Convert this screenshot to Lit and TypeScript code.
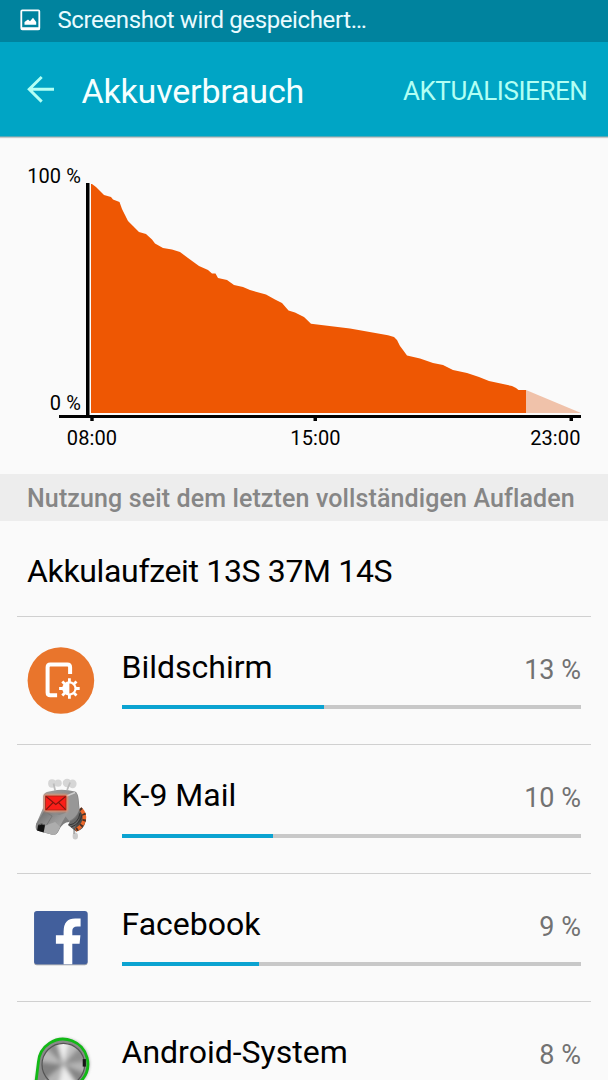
import { LitElement, html, css, svg, TemplateResult } from "lit";
import { customElement, property } from "lit/decorators.js";

const screenIcon = svg`
  <circle cx="33.3" cy="33.5" r="33.3" fill="#e9752c"/>
  <path d="M42.5 27V20.2Q42.5 17.5 39.8 17.5H22.7Q20 17.5 20 20.2V45.5Q20 48.2 22.7 48.2H29.5" fill="none" stroke="#fff" stroke-width="4"/>
  <g transform="translate(41.8 41.5)">
    <circle r="11" fill="#e9752c"/>
    <g stroke="#fff" stroke-width="2.8">
      <path d="M0-10.3V10.3M-10.3 0H10.3M-7.1-7.1L7.1 7.1M7.1-7.1L-7.1 7.1"/>
    </g>
    <circle r="7.2" fill="#fff"/>
    <path d="M0-5A5 5 0 0 1 0 5Z" fill="#e9752c"/>
  </g>`;

const mailIcon = svg`
  <defs>
    <linearGradient id="dog" x1="0" y1="0" x2="1" y2="1">
      <stop offset="0" stop-color="#a4a4a4"/><stop offset=".45" stop-color="#8d8d8d"/><stop offset="1" stop-color="#686868"/>
    </linearGradient>
    <linearGradient id="snout" x1="0" y1="0" x2="1" y2="1">
      <stop offset="0" stop-color="#666"/><stop offset=".5" stop-color="#989898"/><stop offset="1" stop-color="#b4b4b4"/>
    </linearGradient>
    <filter id="glow" x="-30%" y="-30%" width="160%" height="160%"><feGaussianBlur stdDeviation="1.2"/></filter>
  </defs>
  <g transform="translate(-7.5 -10)">
    <g fill="#d6d6d6">
      <ellipse cx="32" cy="18.5" rx="4" ry="4.2"/><ellipse cx="38" cy="18.2" rx="3.6" ry="3.6"/>
      <ellipse cx="47" cy="18" rx="4.4" ry="4.2"/><ellipse cx="52.5" cy="18.8" rx="4" ry="4.4"/>
    </g>
    <path d="M33.5 18.5L35 25.5M50 17.5L47 25" stroke="#bcbcbc" stroke-width="1.8" fill="none"/>
    <ellipse cx="55.2" cy="71" rx="2.7" ry="3.6" fill="#cacaca"/>
    <path d="M54 64V69" stroke="#aaa" stroke-width="1.8"/>
    <path d="M60 43Q67 47 65.5 56Q64 65 56 66.5L48 60Z" fill="#4c4a48"/>
    <path d="M60 43.8Q65.5 48 64 55.5Q62 62 55.5 65" fill="none" stroke="#ec672a" stroke-width="3.6"/>
    <path d="M60 43.8Q65.5 48 64 55.5Q62 62 55.5 65" fill="none" stroke="#493126" stroke-width="3.6" stroke-dasharray="1.8 4.1"/>
    <path d="M50 56L60 45Q61 54 54 64L48 60Z" fill="#686868"/>
    <path d="M49 60Q58 59 60 48M51 62Q60 59 62 50" fill="none" stroke="#333" stroke-width="1"/>
    <path d="M23 31Q24 27 29 26.5L37 25Q45 24 55 26.5Q58 28 58.5 34L59.5 45Q57 54 49 57Q43 57 39 65Q37 70 33 70L17 65.5Q15 64 16 59L23 43Z" fill="url(#dog)"/>
    <path d="M48 30L56 27.5Q58 32 59 45Q56 53 49 56L45 51Z" fill="#979797"/>
    <path d="M44 32L55 27.5" stroke="#d0d0d0" stroke-width="1.4"/>
    <path d="M24 46L39 50L48 47Q43 55 38 65Q36 70 33 70L17 65.5Q15 64 16 59Z" fill="url(#snout)"/>
    <path d="M24 46L32 51L26 61" fill="none" stroke="#777" stroke-width="1"/>
    <path d="M24 61L35 57L40 62Q37 69 34 70L24 67Z" fill="#adadad"/>
    <path d="M18 60Q21 57.5 25 60L23.5 67.5L17 65.5Z" fill="#111"/>
    <path d="M18.5 60Q21.5 58 25 60" stroke="#666" fill="none"/>
    <rect x="24" y="29.5" width="23.5" height="17" rx="1" fill="#f89269" filter="url(#glow)"/>
    <rect x="25.5" y="31" width="20.4" height="14" fill="#fa1e19" stroke="#a22218" stroke-width=".8"/>
    <path d="M26 31.5L35.7 39.5L45.5 31.5M26 44.6L33 37.5M45.5 44.6L38.5 37.5" fill="none" stroke="#81160f" stroke-width="1.1"/>
  </g>`;

const facebookIcon = svg`
  <defs><filter id="fs" x="-10%" y="-10%" width="120%" height="125%"><feDropShadow dx="0" dy="1" stdDeviation=".7" flood-opacity=".4"/></filter></defs>
  <rect x="6.5" y="7" width="53.5" height="53.3" rx="2.8" fill="#425f9c" filter="url(#fs)"/>
  <path d="M36 60.3V39.8H28.3V31.3H36V27.5Q36 14.5 47.5 14.5H53V22.5H49.5Q44.7 22.5 44.7 27V31.3H52.8L52 39.8H44.7V60.3Z" fill="#fff"/>`;

const blades: Array<[number, number, string]> = [
  [-16, 15, "#ededed"], [15, 42, "#c0c0c0"], [42, 82, "#909090"], [82, 112, "#b5b5b5"],
  [112, 146, "#858585"], [146, 194, "#ececec"], [194, 230, "#b5b5b5"], [230, 278, "#818181"],
  [278, 314, "#bababa"], [314, 344, "#8c8c8c"],
];

const systemIcon = svg`
  <defs>
    <filter id="soft"><feGaussianBlur stdDeviation="1.5"/></filter>
    <filter id="metal"><feGaussianBlur stdDeviation="2.2"/></filter>
    <clipPath id="disc"><circle cx="36" cy="31" r="21.5"/></clipPath>
  </defs>
  <g transform="translate(-.3 1.6)">
    <path d="M7 53L12 24A25.5 25.5 0 1 1 55 48Z" fill="#777" opacity=".6" filter="url(#soft)"/>
    <path d="M7.5 58L11 29A24.8 24.8 0 1 1 55 46L44 57Z" fill="#8a8a8a" stroke="#12b916" stroke-width="2.8"/>
    <path d="M9 50L18 46L34 57H8Z" fill="#bdbdbd"/>
    <g clip-path="url(#disc)"><circle cx="36" cy="31" r="22" fill="#aaa"/><g filter="url(#metal)">
      ${blades.map(([from, to, fill]) => {
        const p = (deg: number) => {
          const a = (deg * Math.PI) / 180;
          return `${36 + 30 * Math.sin(a)} ${31 - 30 * Math.cos(a)}`;
        };
        return svg`<path d="M36 31L${p(from)}L${p(to)}Z" fill=${fill}/>`;
      })}
    </g></g>
    <circle cx="36" cy="31" r="21.3" fill="none" stroke="#555" stroke-width="1.2"/>
    <path d="M57 25.5V33" stroke="#161616" stroke-width="3.2" fill="none"/>
  </g>`;

@customElement("usage-row")
class UsageRow extends LitElement {
  @property() name = "";
  @property({ type: Number }) percent = 0;
  @property({ type: Number }) fill = 0;
  @property({ attribute: false }) icon?: TemplateResult<2>;

  static styles = css`
    :host { display: block; box-sizing: border-box; height: 128.25px; margin: 0 17px; padding: 0 10px; border-top: 1px solid #d0d0d0; }
    .row { display: grid; grid-template-columns: 67px 459.5px; column-gap: 27.5px; padding-top: 30px; }
    svg { display: block; width: 67px; height: 67px; overflow: visible; }
    .line { display: flex; justify-content: space-between; height: 58.4px; line-height: 40px; color: #000; font-size: 32px; }
    .value { color: #727272; font-size: 27px; line-height: 46px; }
    .bar { height: 4px; background: #c8c8c8; }
    .fill { height: 4px; background: #0ba3d1; }
  `;

  render() {
    return html`<div class="row">
      <svg viewBox="-.6 0 67 67">${this.icon}</svg>
      <div>
        <div class="line"><span>${this.name}</span><span class="value">${this.percent} %</span></div>
        <div class="bar"><div class="fill" style="width:${this.fill}%"></div></div>
      </div>
    </div>`;
  }
}

@customElement("app-root")
class AppRoot extends LitElement {
  static styles = css`
    :host { display: block; height: 1080px; overflow: hidden; background: #fafafa; font-family: Roboto, sans-serif; color: #000; white-space: nowrap; }
    .status { display: flex; align-items: center; height: 42px; padding-left: 20px; gap: 16.5px; background: #00839e; color: #e9fbff; font-size: 24px; letter-spacing: -.38px; line-height: 40px; box-sizing: border-box; padding-bottom: 2px; }
    .status svg { width: 21px; height: 22px; }
    .header { display: flex; align-items: center; box-sizing: border-box; height: 95px; padding: 4px 21px 0 27px; background: #00a5c5; border-bottom: 1px solid #58a9b8; box-shadow: 0 1px 1px #0003; }
    .header svg { width: 28px; height: 28px; margin: -4px 26.5px 0 0; }
    .title { flex: 1; color: #f5ffff; font-size: 34px; letter-spacing: -.18px; }
    .action { color: #b2fff4; font-size: 26px; letter-spacing: -.42px; margin: -1px -.5px 0 0; }
    .chart { display: block; width: 608px; height: 337px; }
    .section { height: 47px; line-height: 49px; padding-left: 27px; background: #ededed; color: #868686; font-size: 25px; font-weight: 500; letter-spacing: .12px; }
    .runtime { height: 95px; line-height: 100px; padding-left: 27px; font-size: 32px; letter-spacing: -.34px; }
  `;

  render() {
    return html`
      <div class="status">
        <svg viewBox="0 0 21 22"><rect x="1.3" y="1.3" width="18" height="19" rx="1" fill="none" stroke="#fff" stroke-width="1.8"/><path d="M1 18.2H20V20.5H1ZM4.5 15.8V13L8 10.5L10 12.2L13 8.8L16.2 13V15.8Z" fill="#fff"/></svg>
        <span>Screenshot wird gespeichert…</span>
      </div>
      <div class="header">
        <svg viewBox="0 0 28 28"><path d="M14.7 2L2.2 14.3L14.7 26.6M2.2 14.3H27" fill="none" stroke="#b2fff4" stroke-width="2.9"/></svg>
        <span class="title">Akkuverbrauch</span>
        <span class="action">AKTUALISIEREN</span>
      </div>
      <svg class="chart" viewBox="0 137 608 337">
        <path fill="#ee5703" d="M91 184L92 184L96 187L100 191L104 195L111 197L113 199.5L119.5 202L122 209L125 215L128 221L133 226L139 232L146 234L152 239.5L155 243.5L163 248L172 249.5L180 252L188 258L199 266L208 270L212 273.5H215.5L218 278L227 280L234 285L243 287L250 290L266 294.5L275 299.5L282 303L288.5 310.5L295 312.5L304 317L311 323.7L350 328.5L388 335.3L394 337L397 340L400 346L403 350L407 355.5L420 358.5L433 363L443 365L453 370L467 373L479 377L489 381L512 386L516 388L518.5 390H526V413H91Z"/>
        <path fill="#f0c2aa" d="M526 390L581 413H526Z"/>
        <path fill="#000" d="M86 183H89.5V415H581V418H573V421H569.5V418H317V421H313.5V418H93.7V421H90.3V418H59V415H86Z"/>
        <g font-size="20" fill="#000" letter-spacing=".1">
          <text x="81" y="183" text-anchor="end">100 %</text>
          <text x="81" y="410" text-anchor="end">0 %</text>
          <text x="92" y="445" text-anchor="middle">08:00</text>
          <text x="315.5" y="445" text-anchor="middle">15:00</text>
          <text x="580.5" y="445" text-anchor="end">23:00</text>
        </g>
      </svg>
      <div class="section">Nutzung seit dem letzten vollständigen Aufladen</div>
      <div class="runtime">Akkulaufzeit 13S 37M 14S</div>
      <usage-row name="Bildschirm" .percent=${13} .fill=${44} .icon=${screenIcon}></usage-row>
      <usage-row name="K-9 Mail" .percent=${10} .fill=${33} .icon=${mailIcon}></usage-row>
      <usage-row name="Facebook" .percent=${9} .fill=${30} .icon=${facebookIcon}></usage-row>
      <usage-row name="Android-System" .percent=${8} .fill=${27} .icon=${systemIcon}></usage-row>
    `;
  }
}
